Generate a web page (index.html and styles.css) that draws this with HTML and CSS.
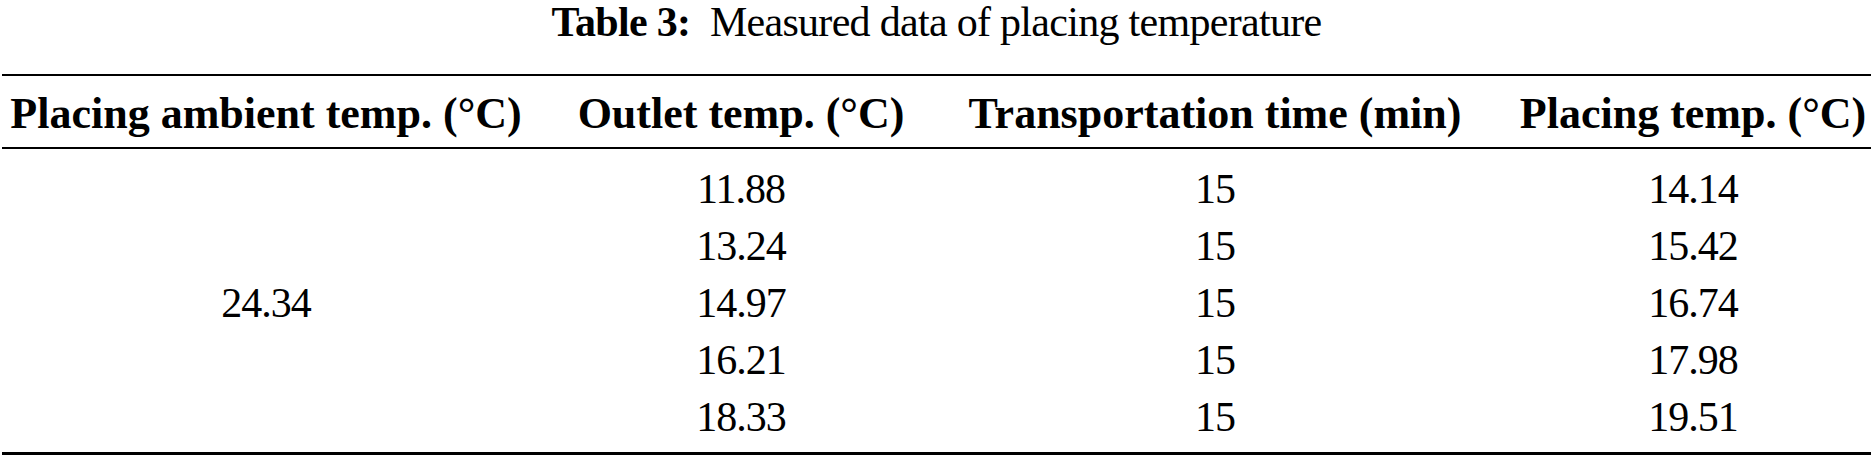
FILE: index.html
```html
<!DOCTYPE html>
<html lang="en">
<head>
<meta charset="utf-8">
<title>Table 3</title>
<link rel="stylesheet" href="styles.css">
</head>
<body>
<div class="wrap">
  <div class="caption"><span class="cap-label">Table 3:</span>&nbsp; Measured data of placing temperature</div>
  <table class="data">
    <colgroup>
      <col class="c1"><col class="c2"><col class="c3"><col class="c4">
    </colgroup>
    <thead>
      <tr>
        <th>Placing ambient temp. (°C)</th>
        <th>Outlet temp. (°C)</th>
        <th>Transportation time (min)</th>
        <th class="last">Placing temp. (°C)</th>
      </tr>
    </thead>
    <tbody>
      <tr class="first">
        <td rowspan="5" class="merged">24.34</td>
        <td>11.88</td><td>15</td><td class="last">14.14</td>
      </tr>
      <tr><td>13.24</td><td>15</td><td class="last">15.42</td></tr>
      <tr><td>14.97</td><td>15</td><td class="last">16.74</td></tr>
      <tr><td>16.21</td><td>15</td><td class="last">17.98</td></tr>
      <tr class="end"><td>18.33</td><td>15</td><td class="last">19.51</td></tr>
    </tbody>
  </table>
</div>
</body>
</html>
```
FILE: styles.css
```css
html, body {
  margin: 0;
  padding: 0;
  background: #ffffff;
}

.wrap {
  padding: 0 3px 0 2px;
  font-family: "Liberation Serif", "Times New Roman", serif;
  color: #000;
}

.caption {
  text-align: center;
  font-size: 42px;
  letter-spacing: -0.7px;
  line-height: 44px;
  margin-bottom: 30px;
}

.cap-label {
  font-weight: bold;
}

.data {
  width: 100%;
  border-collapse: collapse;
  table-layout: fixed;
  border-top: 2px solid #000;
  border-bottom: 3px solid #000;
}

.c1 { width: 528px; }
.c2 { width: 422px; }
.c3 { width: 526px; }
.c4 { width: auto; }

.data thead tr {
  border-bottom: 2px solid #000;
}

.data th {
  font-weight: bold;
  font-size: 44px;
  line-height: 66px;
  padding: 5px 0 0;
  text-align: center;
  white-space: nowrap;
}

.data td {
  font-size: 42px;
  letter-spacing: -1px;
  line-height: 57px;
  padding: 0;
  text-align: center;
}

.data .last {
  padding-left: 37px;
}

.data tr.first td {
  padding-top: 12px;
}

.data tr.end td {
  padding-bottom: 6px;
}

.data td.merged {
  vertical-align: middle;
  padding-top: 12px;
  padding-bottom: 6px;
}
```
